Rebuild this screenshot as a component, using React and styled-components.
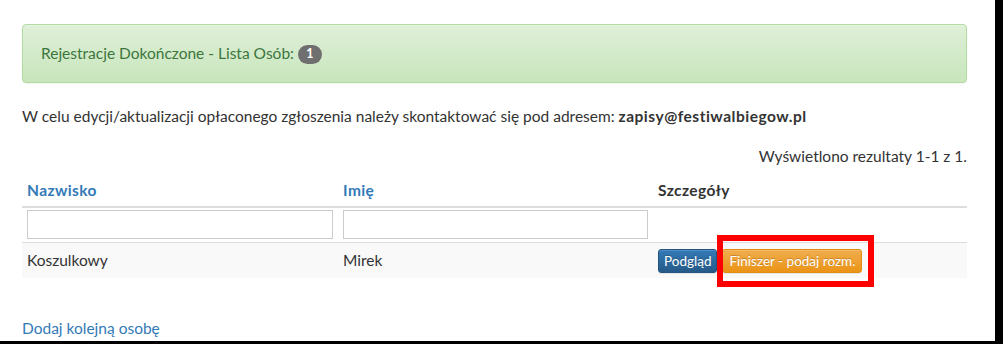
import React from "react";
import styled, { createGlobalStyle } from "styled-components";

const GlobalStyle = createGlobalStyle`
  html, body {
    margin: 0;
    padding: 0;
    background: #000;
  }
  body {
    font-family: "Lato", "Open Sans", sans-serif;
    font-size: 15.5px;
    line-height: 21px;
    color: #333;
  }
`;

const Frame = styled.div`
  width: 995px;
  height: 341px;
  background: #fff;
  overflow: hidden;
`;

const Container = styled.div`
  width: 945px;
  padding: 24px 0 0 22px;
`;

const Alert = styled.div`
  box-sizing: border-box;
  height: 59px;
  padding: 0 18px;
  display: flex;
  align-items: center;
  gap: 4px;
  color: #3c763d;
  background-image: linear-gradient(to bottom, #dff0d8 0, #c8e5bc 100%);
  border: 1px solid #b2dba1;
  border-radius: 4px;
  box-shadow: inset 0 1px 0 rgba(255, 255, 255, 0.25), 0 1px 2px rgba(0, 0, 0, 0.05);
`;

const Badge = styled.span`
  display: inline-flex;
  align-items: center;
  justify-content: center;
  min-width: 24px;
  height: 19px;
  border-radius: 10px;
  background: #6f6f6f;
  color: #fff;
  font-size: 12.5px;
  font-weight: 700;
  line-height: 1;
  margin-top: 1px;
`;

const Note = styled.p`
  margin: 23px 0 0;
  strong {
    font-weight: 700;
    letter-spacing: 0.5px;
  }
`;

const Summary = styled.div`
  margin-top: 19px;
  text-align: right;
`;

const Table = styled.div`
  margin-top: 8px;
  display: grid;
  grid-template-columns: 316px 315px 314px;
`;

const HeadCell = styled.div`
  padding: 5px;
  font-weight: 700;
  letter-spacing: 0.4px;
  color: ${(p) => (p.$link ? "#337ab7" : "#333")};
  border-bottom: 2px solid #ddd;
`;

const FilterCell = styled.div`
  padding: 2px 5px;
  height: 35px;
  box-sizing: border-box;
  border-bottom: 1px solid #ddd;
`;

const FilterInput = styled.input`
  box-sizing: border-box;
  width: 100%;
  height: 29px;
  margin: 0;
  border: 1px solid #ccc;
  border-radius: 0;
  background: #fff;
  font: inherit;
`;

const Cell = styled.div`
  box-sizing: border-box;
  height: 35px;
  padding: 0 5px;
  display: flex;
  align-items: center;
  gap: 5px;
  background: #f9f9f9;
`;

const Button = styled.span`
  position: relative;
  display: inline-flex;
  align-items: center;
  height: 24px;
  box-sizing: border-box;
  padding: 0 ${(p) => (p.$kind === "warning" ? "6px" : "5px")};
  margin-top: 1px;
  font-size: 13.5px;
  color: #fff;
  border-radius: 3px;
  text-shadow: 0 -1px 0 rgba(0, 0, 0, 0.2);
  background-image: ${(p) =>
    p.$kind === "warning"
      ? "linear-gradient(to bottom, #f0ad4e 0, #eb9316 100%)"
      : "linear-gradient(to bottom, #337ab7 0, #265a88 100%)"};
  border: 1px solid ${(p) => (p.$kind === "warning" ? "#e38d13" : "#245580")};
  box-shadow: inset 0 1px 0 rgba(255, 255, 255, 0.15), 0 1px 1px rgba(0, 0, 0, 0.075);
`;

const Highlight = styled.span`
  position: absolute;
  left: -6px;
  top: -15px;
  right: -13px;
  bottom: -15px;
  border: 6px solid #f00;
  pointer-events: none;
`;

const AddLink = styled.a`
  display: block;
  margin-top: 40px;
  color: #337ab7;
  text-decoration: none;
`;

export default function App() {
  return (
    <>
      <GlobalStyle />
      <Frame>
        <Container>
          <Alert>
            Rejestracje Dokończone - Lista Osób: <Badge>1</Badge>
          </Alert>
          <Note>
            W celu edycji/aktualizacji opłaconego zgłoszenia należy skontaktować się pod
            adresem: <strong>zapisy@festiwalbiegow.pl</strong>
          </Note>
          <Summary>Wyświetlono rezultaty 1-1 z 1.</Summary>
          <Table>
            <HeadCell $link>Nazwisko</HeadCell>
            <HeadCell $link>Imię</HeadCell>
            <HeadCell>Szczegóły</HeadCell>
            <FilterCell>
              <FilterInput type="text" />
            </FilterCell>
            <FilterCell>
              <FilterInput type="text" />
            </FilterCell>
            <FilterCell />
            <Cell>Koszulkowy</Cell>
            <Cell>Mirek</Cell>
            <Cell>
              <Button>Podgląd</Button>
              <Button $kind="warning">
                Finiszer - podaj rozm.
                <Highlight />
              </Button>
            </Cell>
          </Table>
          <AddLink href="#">Dodaj kolejną osobę</AddLink>
        </Container>
      </Frame>
    </>
  );
}
